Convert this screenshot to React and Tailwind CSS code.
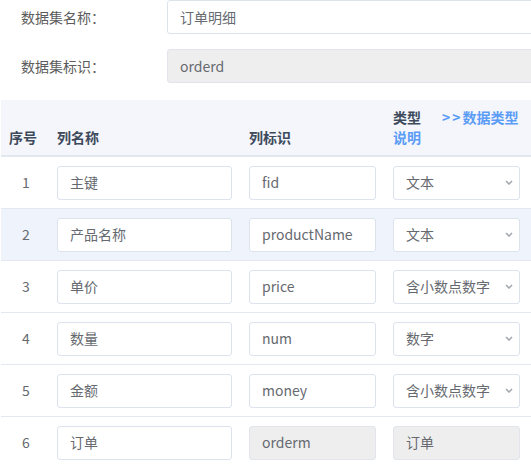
import React from 'react';

const rows = [
  { no: 1, name: '主键', code: 'fid', type: '文本' },
  { no: 2, name: '产品名称', code: 'productName', type: '文本', hl: true },
  { no: 3, name: '单价', code: 'price', type: '含小数点数字' },
  { no: 4, name: '数量', code: 'num', type: '数字' },
  { no: 5, name: '金额', code: 'money', type: '含小数点数字' },
  { no: 6, name: '订单', code: 'orderm', type: '订单', locked: true },
];

const Chevron = () => (
  <svg width="8" height="5" viewBox="0 0 8 5" className="shrink-0">
    <path d="M1 1 L4 4 L7 1" fill="none" stroke="#a3a8b0" strokeWidth="1.6" />
  </svg>
);

const Field = ({ value, disabled, className = '' }) => (
  <div
    className={`h-[34px] shrink-0 flex items-center pl-[12px] border rounded-[3px] text-[#666a70] whitespace-nowrap overflow-hidden ${
      disabled ? 'bg-[#eeeeee] border-[#e1e5eb]' : 'bg-white border-[#dde3ec]'
    } ${className}`}
  >
    {value}
  </div>
);

const App = () => {
  return (
    <div className="w-[531px] h-[465px] overflow-hidden bg-white text-[14px] font-['Noto_Sans_CJK_SC',sans-serif]">
      {/* Dataset info */}
      <div className="flex items-center h-[34px]">
        <div className="w-[167px] shrink-0 pl-[21px] text-[#5c5c5c]">数据集名称：</div>
        <Field value="订单明细" className="w-[400px]" />
      </div>
      <div className="flex items-center h-[34px] mt-[15px]">
        <div className="w-[167px] shrink-0 pl-[21px] text-[#5c5c5c]">数据集标识：</div>
        <Field value="orderd" disabled className="w-[400px]" />
      </div>

      {/* Column table */}
      <div className="ml-[1px] mt-[17px]">
        <div className="flex items-end h-[57px] pb-[8px] bg-[#f4f6fb] border-b-2 border-[#e3e8f0] font-bold text-[#3d4a5c] leading-[20px]">
          <div className="w-[50px] shrink-0 pl-[8px]">序号</div>
          <div className="w-[175px] shrink-0 ml-[6px]">列名称</div>
          <div className="w-[127px] shrink-0 ml-[17px]">列标识</div>
          <div className="ml-[17px] shrink-0">
            <div className="flex">
              <span>类型</span>
              <span className="ml-[21px] text-[#5b9cf6] tracking-[2px]">&gt;&gt;<span className="tracking-normal">数据类型</span></span>
            </div>
            <div className="text-[#5b9cf6]">说明</div>
          </div>
        </div>

        {rows.map((r) => (
          <div
            key={r.no}
            className={`flex items-center h-[52px] border-b border-[#e4e9f0] text-[#666a70] ${r.hl ? 'bg-[#eef3fc]' : ''}`}
          >
            <div className="w-[50px] shrink-0 text-center">{r.no}</div>
            <Field value={r.name} className="w-[175px] ml-[6px]" />
            <Field value={r.code} disabled={r.locked} className="w-[127px] ml-[17px]" />
            {r.locked ? (
              <Field value={r.type} disabled className="w-[127px] ml-[17px]" />
            ) : (
              <div className="h-[34px] w-[127px] ml-[17px] shrink-0 flex items-center justify-between pl-[12px] pr-[6px] bg-white border border-[#dde3ec] rounded-[3px] text-[#666a70] whitespace-nowrap">
                <span>{r.type}</span>
                <Chevron />
              </div>
            )}
          </div>
        ))}
      </div>
    </div>
  );
};

export default App;
